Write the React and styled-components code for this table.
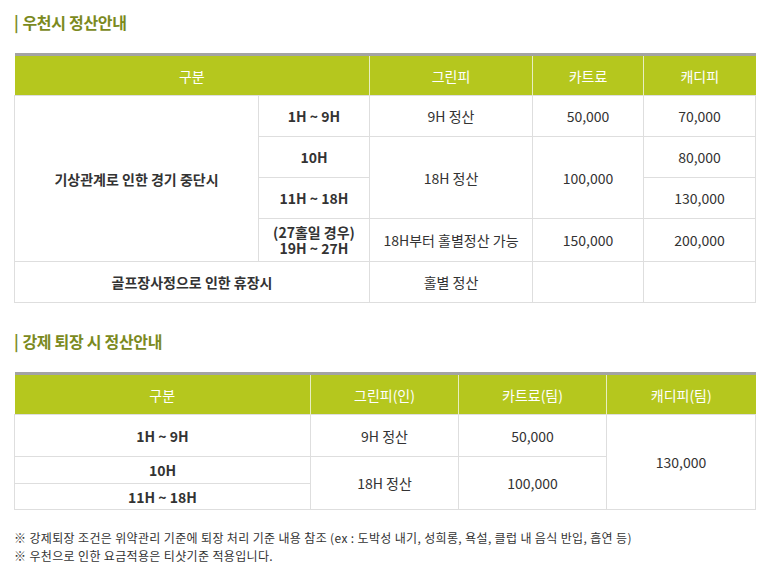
import React from 'react';
import styled, { createGlobalStyle } from 'styled-components';

const GlobalStyle = createGlobalStyle`
  body {
    margin: 0;
    background: #fff;
    font-family: "Noto Sans CJK KR", "Noto Sans", sans-serif;
    color: #333;
  }
`;

const Page = styled.div`
  padding: 10px 17px 0 14px;
`;

const Title = styled.h3`
  margin: 0 0 19px;
  height: 24px;
  line-height: 24px;
  font-size: 16px;
  font-weight: 700;
  color: #7b8a1e;
  letter-spacing: -0.3px;

  &::before {
    content: '|';
    margin-right: 4px;
  }
`;

const Table = styled.table`
  width: 741px;
  border-collapse: collapse;
  table-layout: fixed;
  border-top: 3px solid #a3a3a3;
  margin-bottom: ${({ $gap }) => $gap}px;
  font-size: 14px;
`;

const Th = styled.th`
  height: 39px;
  padding: 0;
  background: #b5c71e;
  color: #fff;
  font-weight: 400;
  border-left: 1px solid #e8eec0;

  &:first-child {
    border-left: none;
  }
`;

const Td = styled.td`
  height: ${({ $h }) => $h || 40}px;
  padding: 0;
  text-align: center;
  border: 1px solid #dedede;
  font-weight: ${({ $bold }) => ($bold ? 600 : 400)};
  line-height: 16px;
  color: #333;
`;

const Notes = styled.ul`
  list-style: none;
  margin: 0;
  padding: 0;
  font-size: 12px;
  line-height: 18px;
  color: #333;
  letter-spacing: 0.35px;
`;

const Note = styled.li`
  &::before {
    content: '※ ';
  }
`;

function RainTable() {
  return (
    <Table $gap={26}>
      <colgroup>
        <col width="244" />
        <col width="111" />
        <col width="163" />
        <col width="111" />
        <col width="112" />
      </colgroup>
      <thead>
        <tr>
          <Th colSpan={2}>구분</Th>
          <Th>그린피</Th>
          <Th>카트료</Th>
          <Th>캐디피</Th>
        </tr>
      </thead>
      <tbody>
        <tr>
          <Td $bold rowSpan={4}>기상관계로 인한 경기 중단시</Td>
          <Td $bold $h={40}>1H ~ 9H</Td>
          <Td>9H 정산</Td>
          <Td>50,000</Td>
          <Td>70,000</Td>
        </tr>
        <tr>
          <Td $bold $h={40}>10H</Td>
          <Td rowSpan={2}>18H 정산</Td>
          <Td rowSpan={2}>100,000</Td>
          <Td>80,000</Td>
        </tr>
        <tr>
          <Td $bold $h={40}>11H ~ 18H</Td>
          <Td>130,000</Td>
        </tr>
        <tr>
          <Td $bold $h={42}>(27홀일 경우)<br />19H ~ 27H</Td>
          <Td>18H부터 홀별정산 가능</Td>
          <Td>150,000</Td>
          <Td>200,000</Td>
        </tr>
        <tr>
          <Td $bold colSpan={2} $h={40}>골프장사정으로 인한 휴장시</Td>
          <Td>홀별 정산</Td>
          <Td></Td>
          <Td></Td>
        </tr>
      </tbody>
    </Table>
  );
}

function ForcedTable() {
  return (
    <Table $gap={19}>
      <colgroup>
        <col width="296" />
        <col width="148" />
        <col width="148" />
        <col width="149" />
      </colgroup>
      <thead>
        <tr>
          <Th>구분</Th>
          <Th>그린피(인)</Th>
          <Th>카트료(팀)</Th>
          <Th>캐디피(팀)</Th>
        </tr>
      </thead>
      <tbody>
        <tr>
          <Td $bold $h={41}>1H ~ 9H</Td>
          <Td>9H 정산</Td>
          <Td>50,000</Td>
          <Td rowSpan={3}>130,000</Td>
        </tr>
        <tr>
          <Td $bold $h={26}>10H</Td>
          <Td rowSpan={2}>18H 정산</Td>
          <Td rowSpan={2}>100,000</Td>
        </tr>
        <tr>
          <Td $bold $h={25}>11H ~ 18H</Td>
        </tr>
      </tbody>
    </Table>
  );
}

export default function App() {
  return (
    <Page>
      <GlobalStyle />
      <Title>우천시 정산안내</Title>
      <RainTable />
      <Title>강제 퇴장 시 정산안내</Title>
      <ForcedTable />
      <Notes>
        <Note>강제퇴장 조건은 위약관리 기준에 퇴장 처리 기준 내용 참조 (ex : 도박성 내기, 성희롱, 욕설, 클럽 내 음식 반입, 흡연 등)</Note>
        <Note>우천으로 인한 요금적용은 티샷기준 적용입니다.</Note>
      </Notes>
    </Page>
  );
}
